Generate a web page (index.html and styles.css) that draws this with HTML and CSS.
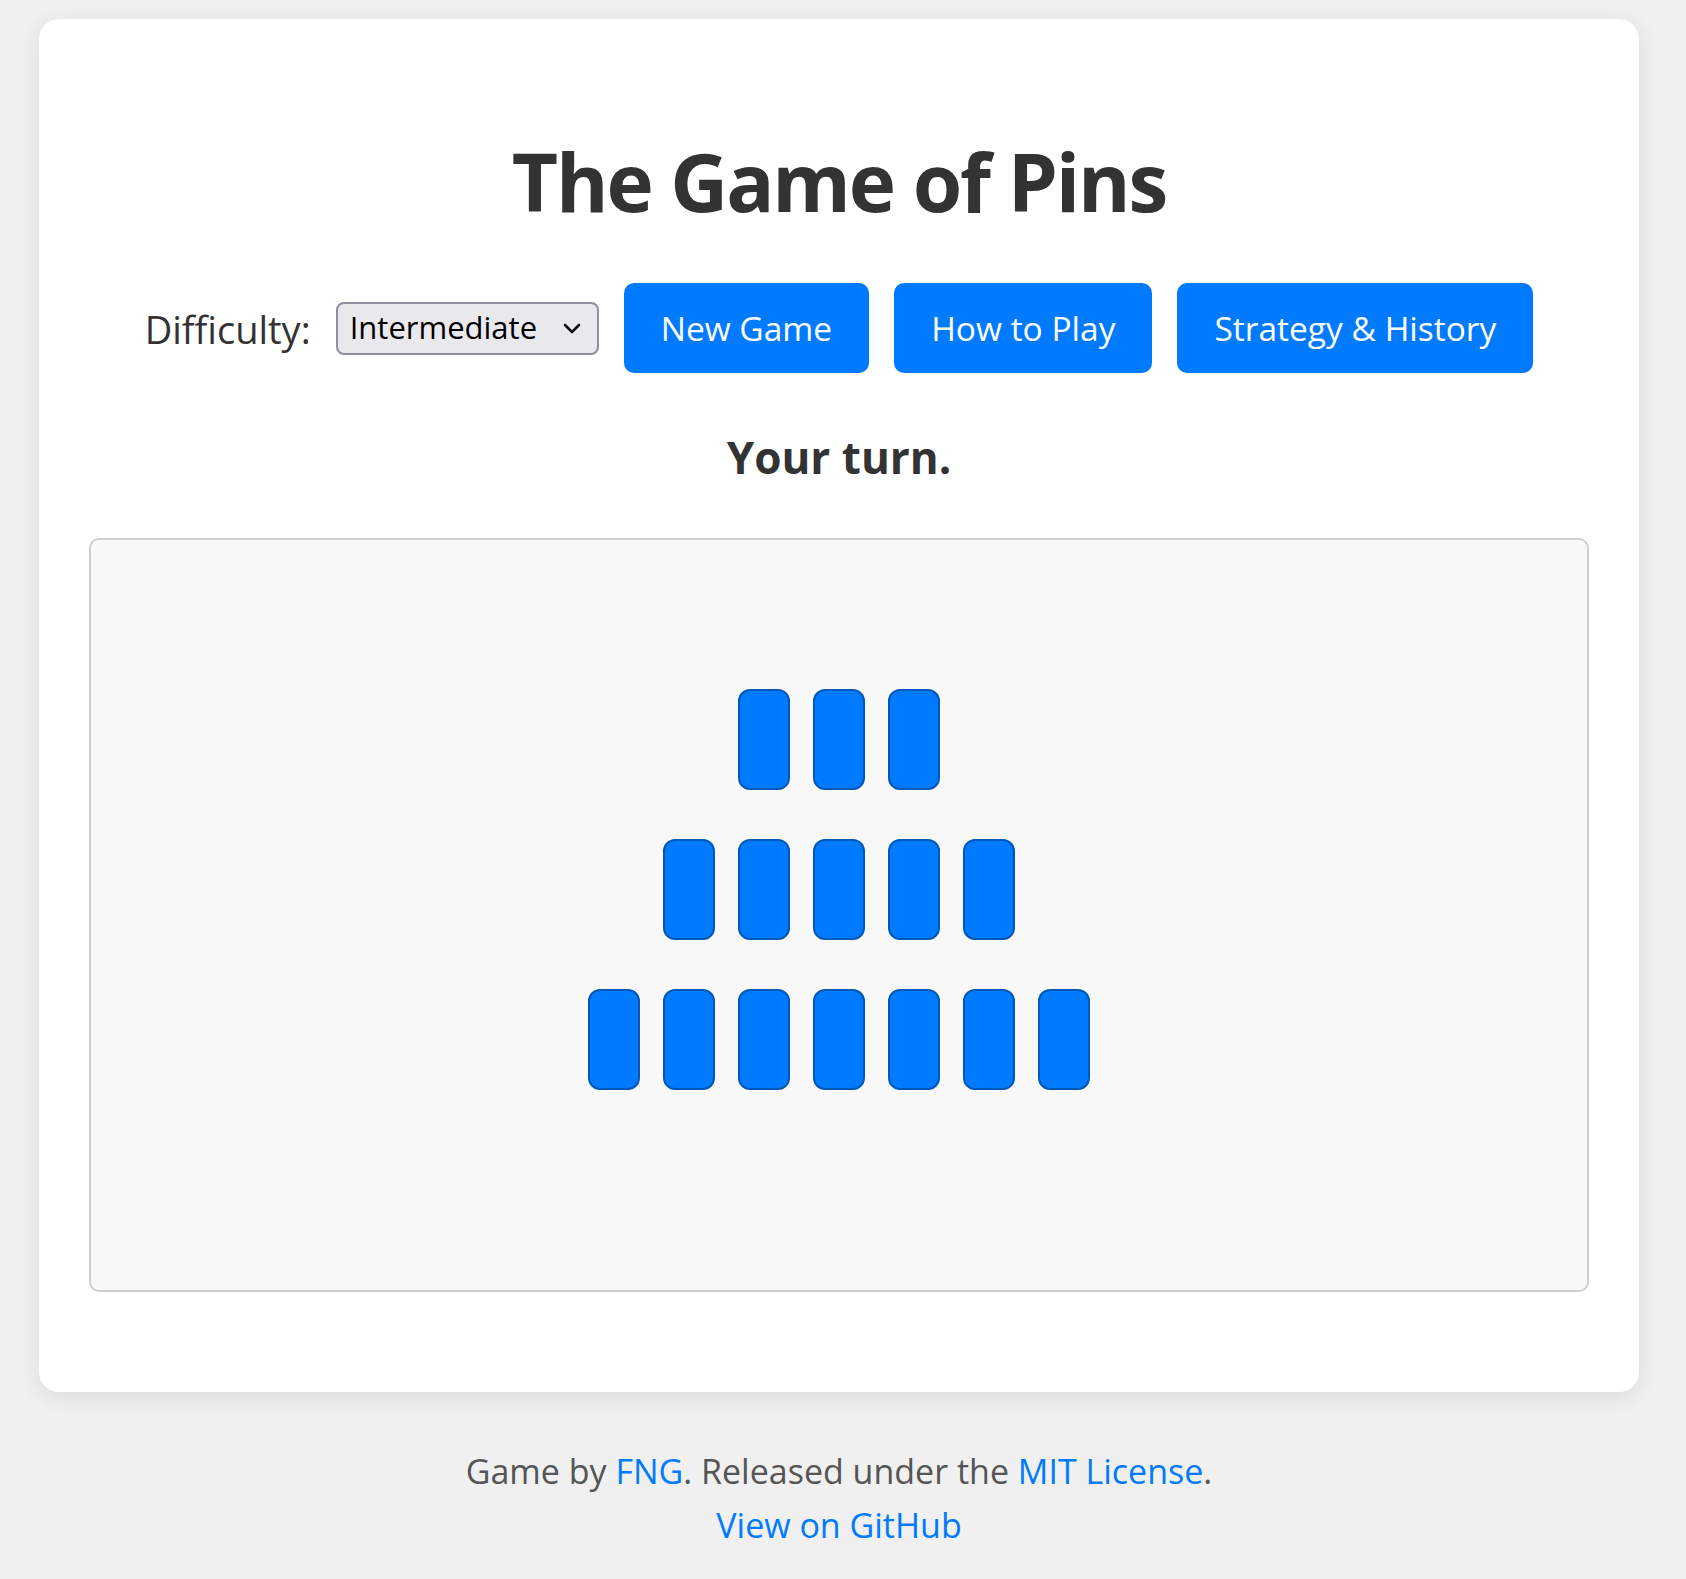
FILE: index.html
```html
<!DOCTYPE html>
<html lang="en">
<head>
<meta charset="utf-8">
<title>The Game of Pins</title>
<link rel="stylesheet" href="styles.css">
</head>
<body>
<div class="page">
  <main class="card">
    <h1 class="title">The Game of Pins</h1>
    <div class="controls">
      <label class="label" for="difficulty">Difficulty:</label>
      <span class="select-wrap">
        <select id="difficulty" class="select">
          <option>Beginner</option>
          <option selected>Intermediate</option>
          <option>Expert</option>
        </select>
        <svg class="chevron" width="18" height="11" viewBox="0 0 18 11"><path d="M2 2 L9 9 L16 2" fill="none" stroke="#111" stroke-width="2.6" stroke-linecap="round" stroke-linejoin="round"/></svg>
      </span>
      <button class="btn">New Game</button>
      <button class="btn">How to Play</button>
      <button class="btn">Strategy &amp; History</button>
    </div>
    <p class="status">Your turn.</p>
    <div class="board">
      <div class="row">
        <div class="pin"></div><div class="pin"></div><div class="pin"></div>
      </div>
      <div class="row">
        <div class="pin"></div><div class="pin"></div><div class="pin"></div><div class="pin"></div><div class="pin"></div>
      </div>
      <div class="row">
        <div class="pin"></div><div class="pin"></div><div class="pin"></div><div class="pin"></div><div class="pin"></div><div class="pin"></div><div class="pin"></div>
      </div>
    </div>
  </main>
  <footer class="footer">
    <p class="footer-line">Game by <a class="link" href="#">FNG</a>. Released under the <a class="link" href="#">MIT License</a>.</p>
    <p class="footer-line"><a class="link" href="#">View on GitHub</a></p>
  </footer>
</div>
</body>
</html>
```
FILE: styles.css
```css
* { box-sizing: border-box; }

html, body {
  margin: 0;
  padding: 0;
  background: #f0f0f0;
}

body {
  font-family: "Segoe UI", "Open Sans", "Noto Sans", sans-serif;
  color: #333;
}

.page {
  width: 1600px;
  margin: 19px 0 0 39px;
}

.card {
  display: flex;
  flex-direction: column;
  align-items: center;
  background: #fff;
  border-radius: 20px;
  box-shadow: 0 5px 22px rgba(0, 0, 0, 0.09);
  padding: 50px 50px 50px;
  height: 1373px;
}

.title {
  margin: 64px 0 0;
  font-size: 80px;
  line-height: 96px;
  font-weight: 700;
  letter-spacing: -2.1px;
  color: #333;
}

.controls {
  display: flex;
  align-items: center;
  gap: 25px;
  margin-top: 54px;
  height: 90px;
}

.label {
  font-size: 38px;
  color: #333;
  margin-top: 2px;
}

.select-wrap {
  position: relative;
  display: inline-flex;
}

.select {
  appearance: none;
  -webkit-appearance: none;
  width: 263px;
  height: 53px;
  font-family: inherit;
  font-size: 31px;
  color: #000;
  background: #e9e9ed;
  border: 2px solid #8f8f9d;
  border-radius: 8px;
  padding: 0 0 2px 12px;
  margin: 0;
}

.chevron {
  position: absolute;
  right: 18px;
  top: 21px;
  pointer-events: none;
}

.btn {
  font-family: inherit;
  font-size: 33.5px;
  line-height: 40px;
  color: #fff;
  background: #007bff;
  border: none;
  border-radius: 10px;
  padding: 25px 37px;
  margin: 0;
}

.status {
  margin: 58px 0 0;
  font-size: 44px;
  line-height: 53px;
  font-weight: 700;
  color: #333;
}

.board {
  width: 1500px;
  margin-top: 54px;
  background: #f8f8f8;
  border: 2px solid #cfcfcf;
  border-radius: 10px;
  padding: 149px 0 200px;
  display: flex;
  flex-direction: column;
  align-items: center;
  gap: 49px;
}

.row {
  display: flex;
  gap: 23px;
}

.pin {
  width: 52px;
  height: 101px;
  background: #007bff;
  border: 2px solid #0059b8;
  border-radius: 12px;
}

.footer {
  text-align: center;
  padding-top: 52px;
}

.footer-line {
  margin: 0;
  font-size: 34px;
  line-height: 54px;
  color: #555;
}

.link {
  color: #007bff;
  text-decoration: none;
}
```
